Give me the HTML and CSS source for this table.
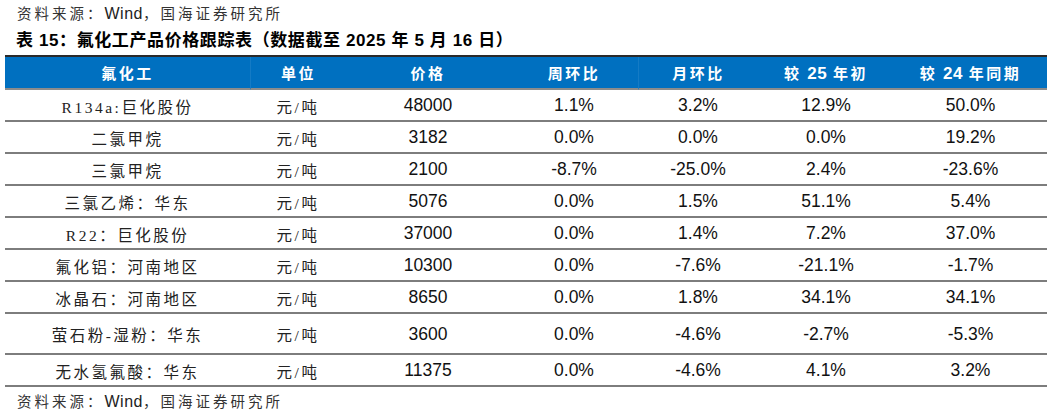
FILE: index.html
```html
<!DOCTYPE html>
<html lang="zh-CN">
<head>
<meta charset="utf-8">
<title>氟化工产品价格跟踪表</title>
<link rel="stylesheet" href="styles.css">
</head>
<body>
<div class="page">
  <p class="source source-top">资料来源：<span class="lat">Wind</span>，国海证券研究所</p>
  <h1 class="title">表 15：氟化工产品价格跟踪表（数据截至 2025 年 5 月 16 日）</h1>
  <table class="grid">
    <colgroup>
      <col class="c1"><col class="c2"><col class="c3"><col class="c4"><col class="c5"><col class="c6"><col class="c7">
    </colgroup>
    <thead>
      <tr>
        <th>氟化工</th>
        <th class="sep">单位</th>
        <th>价格</th>
        <th>周环比</th>
        <th class="sep">月环比</th>
        <th>较 <span class="lat">25</span> 年初</th>
        <th>较 <span class="lat">24</span> 年同期</th>
      </tr>
    </thead>
    <tbody>
      <tr><td class="name">R134a:巨化股份</td><td class="unit">元/吨</td><td>48000</td><td>1.1%</td><td>3.2%</td><td>12.9%</td><td>50.0%</td></tr>
      <tr><td class="name">二氯甲烷</td><td class="unit">元/吨</td><td>3182</td><td>0.0%</td><td>0.0%</td><td>0.0%</td><td>19.2%</td></tr>
      <tr><td class="name">三氯甲烷</td><td class="unit">元/吨</td><td>2100</td><td>-8.7%</td><td>-25.0%</td><td>2.4%</td><td>-23.6%</td></tr>
      <tr><td class="name">三氯乙烯：华东</td><td class="unit">元/吨</td><td>5076</td><td>0.0%</td><td>1.5%</td><td>51.1%</td><td>5.4%</td></tr>
      <tr><td class="name">R22：巨化股份</td><td class="unit">元/吨</td><td>37000</td><td>0.0%</td><td>1.4%</td><td>7.2%</td><td>37.0%</td></tr>
      <tr><td class="name">氟化铝：河南地区</td><td class="unit">元/吨</td><td>10300</td><td>0.0%</td><td>-7.6%</td><td>-21.1%</td><td>-1.7%</td></tr>
      <tr><td class="name">冰晶石：河南地区</td><td class="unit">元/吨</td><td>8650</td><td>0.0%</td><td>1.8%</td><td>34.1%</td><td>34.1%</td></tr>
      <tr class="tall"><td class="name">萤石粉-湿粉：华东</td><td class="unit">元/吨</td><td>3600</td><td>0.0%</td><td>-4.6%</td><td>-2.7%</td><td>-5.3%</td></tr>
      <tr><td class="name">无水氢氟酸：华东</td><td class="unit">元/吨</td><td>11375</td><td>0.0%</td><td>-4.6%</td><td>4.1%</td><td>3.2%</td></tr>
    </tbody>
  </table>
  <p class="source source-bottom">资料来源：<span class="lat">Wind</span>，国海证券研究所</p>
</div>
</body>
</html>
```

FILE: styles.css
```css
html, body {
  margin: 0;
  padding: 0;
  background: #ffffff;
}

.page {
  width: 1053px;
  padding: 0 6px 0 5px;
  box-sizing: border-box;
  font-family: "Liberation Sans", "Noto Sans CJK SC", sans-serif;
  color: #000;
}

.source {
  margin: 0;
  padding-left: 12px;
  font-family: "Noto Sans CJK SC", sans-serif;
  font-size: 14.5px;
  letter-spacing: 3px;
  color: #333;
  line-height: 26px;
  height: 26px;
}

.source .lat {
  font-family: "Liberation Sans", sans-serif;
  font-size: 16px;
  letter-spacing: 0.5px;
  color: #222;
}

.source-bottom {
  margin-top: 1px;
}

.title {
  margin: 0;
  padding-left: 11px;
  height: 29px;
  line-height: 29px;
  font-size: 17px;
  font-weight: 700;
  letter-spacing: 0.6px;
  color: #000;
}

.grid {
  width: 1042px;
  table-layout: fixed;
  border-collapse: separate;
  border-spacing: 0;
  border-top: 2px solid #2a2a2a;
}

.c1 { width: 245px; }
.c2 { width: 96px; }
.c3 { width: 164px; }
.c4 { width: 128px; }
.c5 { width: 120px; }
.c6 { width: 136px; }
.c7 { width: 153px; }

.grid th {
  box-sizing: border-box;
  height: 33px;
  padding: 0;
  background: #0070c0;
  color: #fff;
  font-family: "Noto Sans CJK SC", sans-serif;
  font-weight: 700;
  font-size: 15px;
  letter-spacing: 2.5px;
  text-align: center;
  vertical-align: middle;
  border-bottom: 2px solid #8c8c8c;
}

.grid th .lat {
  font-family: "Liberation Sans", sans-serif;
  font-size: 17px;
  letter-spacing: 0.5px;
}

.grid th.sep {
  border-left: 1px solid rgba(255, 255, 255, 0.08);
}

.grid td {
  box-sizing: border-box;
  height: 32px;
  padding: 1px 0 0 0;
  text-align: center;
  vertical-align: middle;
  font-size: 17.5px;
  border-bottom: 2px solid #7d7d7d;
  color: #111;
}

.grid tr.tall td {
  height: 41px;
}

.grid td.name,
.grid td.unit {
  font-family: "Liberation Serif", "Noto Sans CJK SC", serif;
  font-size: 15.5px;
  letter-spacing: 2.5px;
  color: #222;
}
```
